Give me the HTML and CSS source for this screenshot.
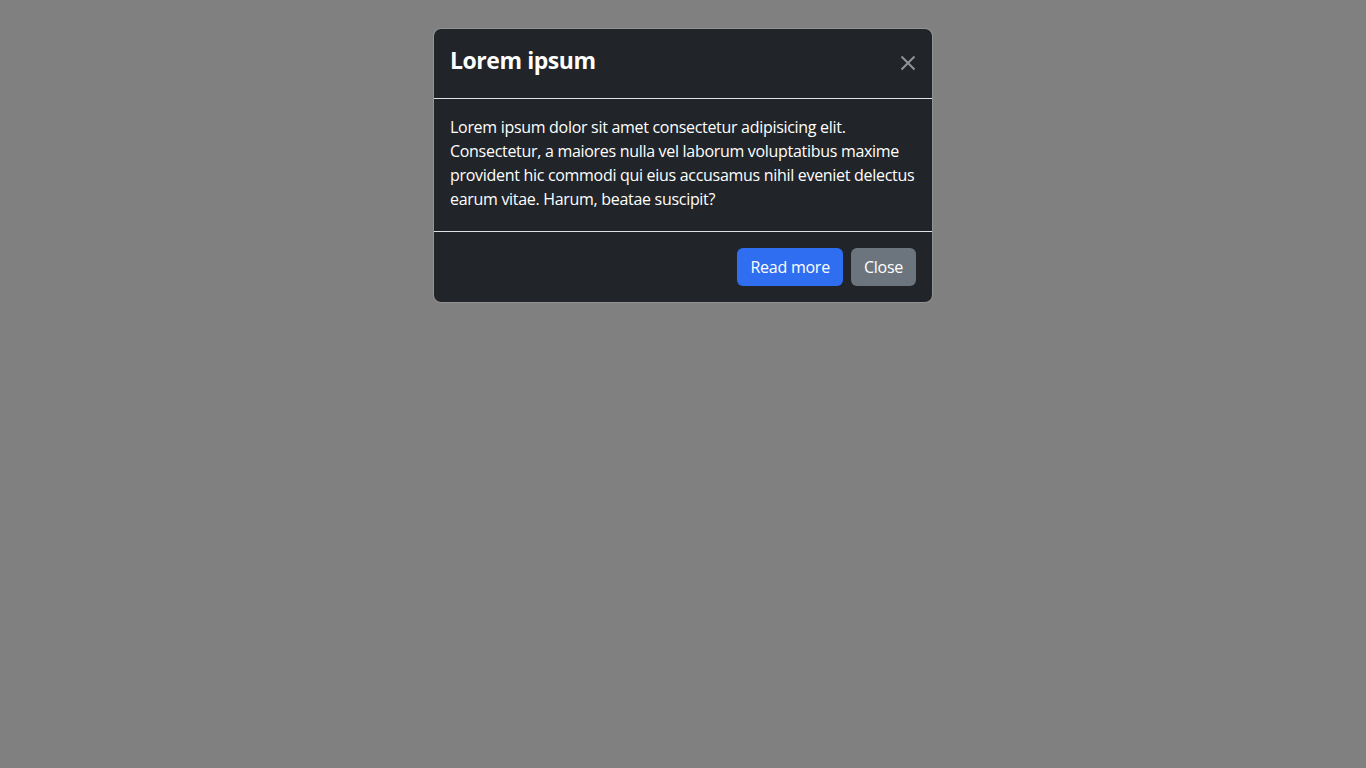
FILE: index.html
```html
<!DOCTYPE html>
<html lang="en">
<head>
<meta charset="utf-8">
<title>Modal</title>
<link rel="stylesheet" href="styles.css">
</head>
<body>
<div class="backdrop">
  <div class="modal">
    <div class="modal-header">
      <h4 class="modal-title">Lorem ipsum</h4>
      <button class="btn-close" aria-label="Close">
        <svg viewBox="0 0 16 16" width="16" height="16"><path d="M1.5 1.5L14.5 14.5M14.5 1.5L1.5 14.5" stroke="currentColor" stroke-width="2" stroke-linecap="butt"/></svg>
      </button>
    </div>
    <div class="modal-body">
      <p>Lorem ipsum dolor sit amet consectetur adipisicing elit. Consectetur, a maiores nulla vel laborum voluptatibus maxime provident hic commodi qui eius accusamus nihil eveniet delectus earum vitae. Harum, beatae suscipit?</p>
    </div>
    <div class="modal-footer">
      <button class="btn btn-primary">Read more</button>
      <button class="btn btn-secondary">Close</button>
    </div>
  </div>
</div>
</body>
</html>
```
FILE: styles.css
```css
* { box-sizing: border-box; }
html, body { margin: 0; height: 100%; }
body {
  background: #808080;
  font-family: "Open Sans", "Noto Sans", sans-serif;
  color: #fff;
}
.backdrop {
  min-height: 100%;
  display: flex;
  justify-content: center;
  align-items: flex-start;
  padding-top: 28px;
}
.modal {
  width: 500px;
  background: #212529;
  background-clip: padding-box;
  border: 1px solid rgba(255,255,255,0.15);
  border-radius: 8px;
}
.modal-header {
  display: flex;
  align-items: center;
  justify-content: space-between;
  padding: 16px 12px 17px 16px;
  border-bottom: 1px solid #dee2e6;
}
.modal-title {
  margin: 0;
  font-size: 23px;
  font-weight: 700;
  line-height: 36px;
  letter-spacing: -0.45px;
  position: relative;
  top: -3px;
}
.btn-close {
  background: none;
  border: 0;
  padding: 4px;
  color: rgba(255,255,255,0.5);
  display: flex;
  cursor: pointer;
}
.modal-body {
  padding: 16px 16px 20px;
  font-size: 16px;
  line-height: 24px;
  letter-spacing: -0.3px;
}
.modal-body p { margin: 0; }
.modal-footer {
  display: flex;
  justify-content: flex-end;
  gap: 8px;
  padding: 16px 16px 16px;
  border-top: 1px solid #dee2e6;
}
.btn {
  font-family: inherit;
  font-size: 16px;
  line-height: 24px;
  padding: 6px 12px;
  border: 1px solid transparent;
  border-radius: 6px;
  color: #fff;
  letter-spacing: -0.25px;
}
.btn-primary { background: #2f6ef0; }
.btn-secondary { background: #6c757d; }
```
